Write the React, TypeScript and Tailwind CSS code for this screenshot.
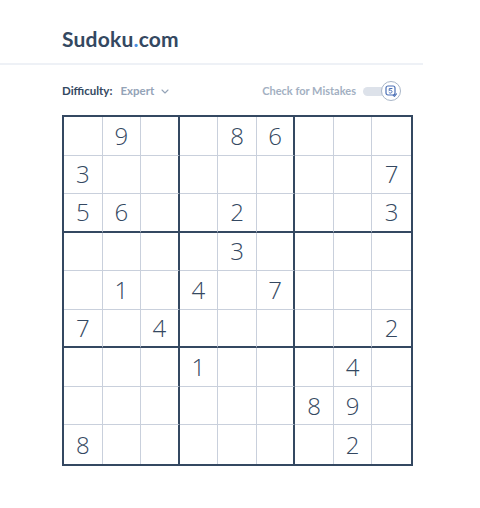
import React from 'react';

const puzzle: number[][] = [
  [0, 9, 0, 0, 8, 6, 0, 0, 0],
  [3, 0, 0, 0, 0, 0, 0, 0, 7],
  [5, 6, 0, 0, 2, 0, 0, 0, 3],
  [0, 0, 0, 0, 3, 0, 0, 0, 0],
  [0, 1, 0, 4, 0, 7, 0, 0, 0],
  [7, 0, 4, 0, 0, 0, 0, 0, 2],
  [0, 0, 0, 1, 0, 0, 0, 4, 0],
  [0, 0, 0, 0, 0, 0, 8, 9, 0],
  [8, 0, 0, 0, 0, 0, 0, 2, 0],
];

function Cell({ value, row, col }: { value: number; row: number; col: number }) {
  // thick lines between 3x3 boxes, none on the outer edge (container has it)
  const right =
    col === 8
      ? 'border-r-0'
      : col === 2 || col === 5
        ? 'border-r-2 border-r-[#344861]'
        : 'border-r border-r-[#c9d0dc]';
  const bottom =
    row === 8
      ? 'border-b-0'
      : row === 2 || row === 5
        ? 'border-b-2 border-b-[#344861]'
        : 'border-b border-b-[#c9d0dc]';

  return (
    <div
      className={`flex items-center justify-center text-[24px] font-light leading-none text-[#344861] ${right} ${bottom}`}
    >
      {value !== 0 ? value : ''}
    </div>
  );
}

function MistakesToggle() {
  return (
    <div className="relative flex h-[20px] w-[38px] items-center">
      <div className="h-[9px] w-[22px] rounded-full bg-[#dde2ea]" />
      <div className="absolute right-0 top-0 flex h-[20px] w-[20px] items-center justify-center rounded-full border border-[#a9b6c8] bg-white">
        <svg width="12" height="12" viewBox="0 0 12 12" fill="none">
          <rect x="1" y="1" width="9" height="9" rx="2" stroke="#4a6fb5" strokeWidth="1.2" />
          <path d="M7 3.5H4.3L4.1 5.6C4.5 5.3 4.9 5.2 5.4 5.2C6.4 5.2 7 5.8 7 6.6C7 7.5 6.3 8.1 5.4 8.1C4.8 8.1 4.3 7.8 4 7.4" stroke="#4a6fb5" strokeWidth="1" strokeLinecap="round" strokeLinejoin="round" />
          <path d="M8.2 10.3L9.4 11.3L11.5 8.8" stroke="#4a6fb5" strokeWidth="1.1" strokeLinecap="round" strokeLinejoin="round" />
        </svg>
      </div>
    </div>
  );
}

export default function App() {
  return (
    <div className="min-h-[508px] w-[480px] bg-white" style={{ fontFamily: '"Open Sans", "Liberation Sans", sans-serif' }}>
      <div className="w-[423px]">
        {/* Header */}
        <header className="h-[65px] border-b-2 border-[#eef1f6] pl-[62px] pt-[24px]">
          <div className="font-['Lato','Open_Sans',sans-serif] text-[21px] font-bold leading-[30px] tracking-[0.2px] text-[#344861]">
            Sudoku<span className="text-[#4b8fe2]">.</span>com
          </div>
        </header>

        {/* Toolbar */}
        <div className="ml-[62px] mt-[14px] flex h-[24px] w-[339px] items-center justify-between font-['Lato','Open_Sans',sans-serif]">
          <div className="flex items-center text-[11.5px]">
            <span className="font-bold text-[#344861]">Difficulty:</span>
            <span className="ml-[8px] font-bold text-[#94a3b7]">Expert</span>
            <svg className="ml-[7px]" width="8" height="5" viewBox="0 0 8 5" fill="none">
              <path d="M1 1L4 4L7 1" stroke="#94a3b7" strokeWidth="1.1" strokeLinecap="round" strokeLinejoin="round" />
            </svg>
          </div>
          <div className="flex items-center gap-[7px]">
            <span className="text-[11px] font-bold text-[#a3b0c2]">Check for Mistakes</span>
            <MistakesToggle />
          </div>
        </div>

        {/* Board */}
        <div className="ml-[62px] mt-[12px] grid h-[351px] w-[351px] grid-cols-9 grid-rows-9 border-2 border-[#344861]">
          {puzzle.map((r, ri) =>
            r.map((v, ci) => <Cell key={`${ri}-${ci}`} value={v} row={ri} col={ci} />),
          )}
        </div>
      </div>
    </div>
  );
}
